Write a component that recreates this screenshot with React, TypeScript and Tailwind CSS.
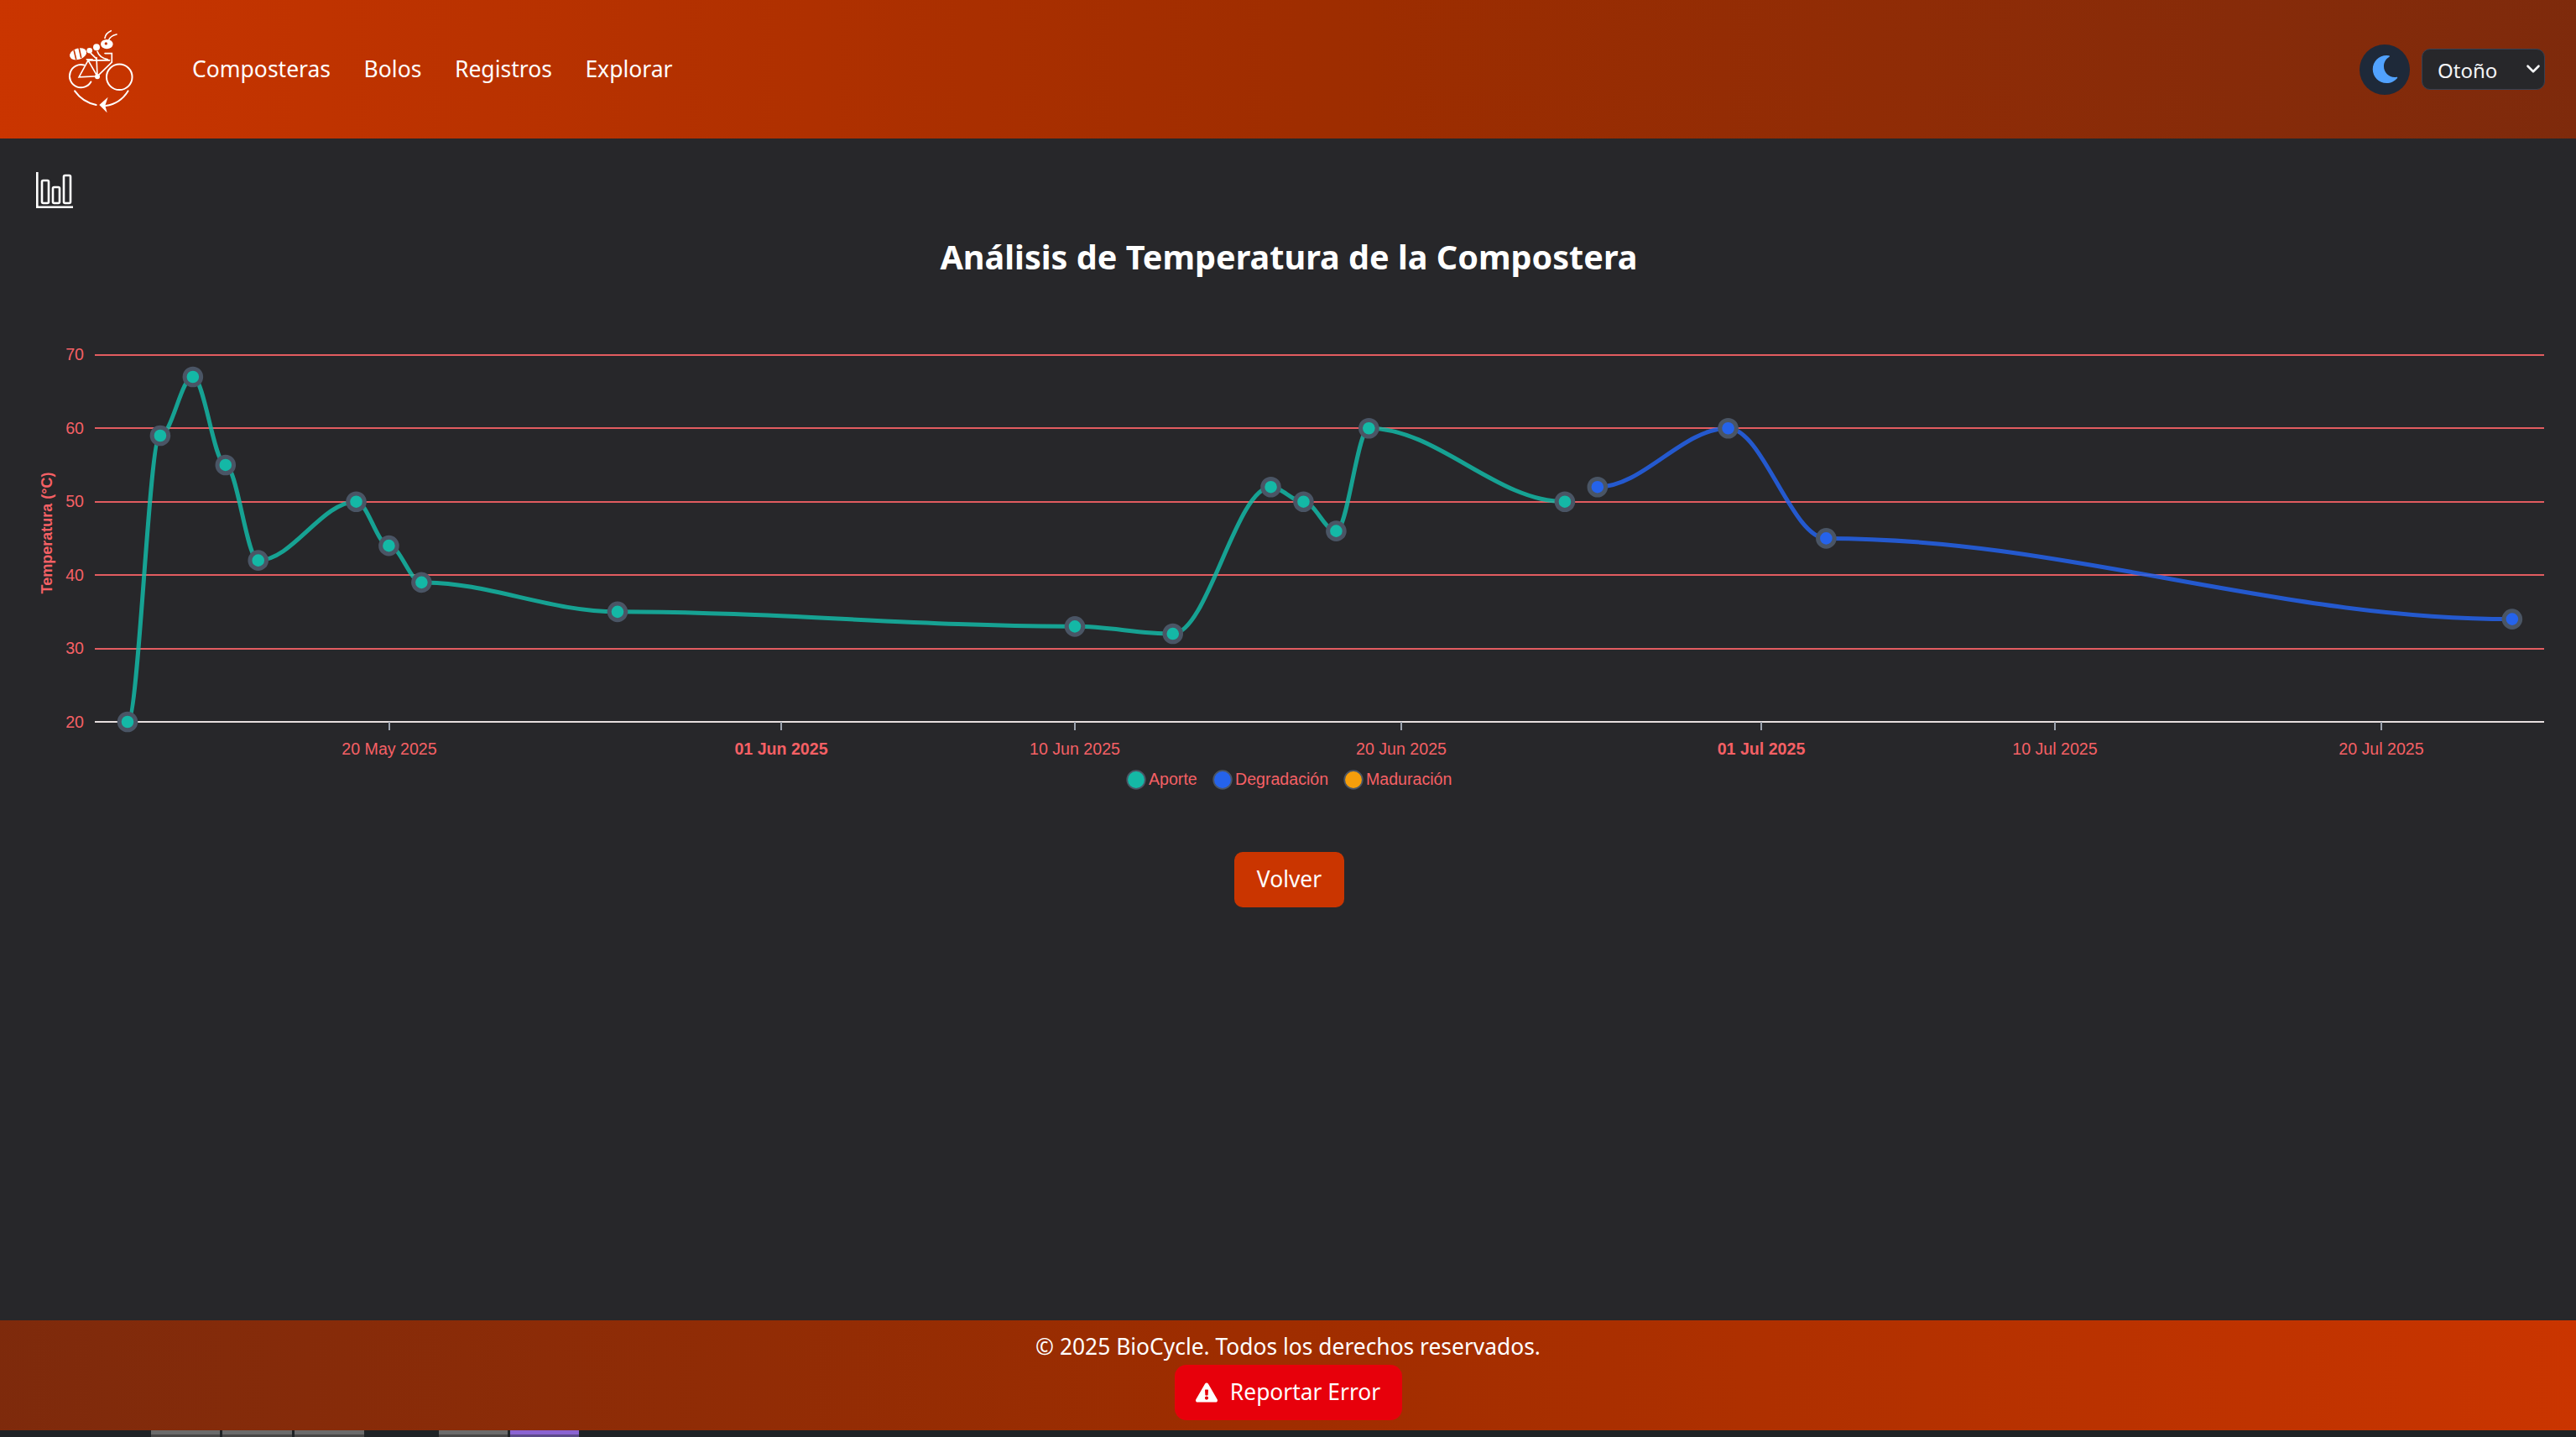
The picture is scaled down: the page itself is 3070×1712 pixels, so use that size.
import React from 'react';
import { ChevronDown } from 'lucide-react';
import { FaExclamationTriangle, FaMoon } from 'react-icons/fa';

type Point = { day: number; temp: number };

// days are counted from 12 May 2025
const aporte: Point[] = [
  { day: 0, temp: 20 }, { day: 1, temp: 59 }, { day: 2, temp: 67 }, { day: 3, temp: 55 },
  { day: 4, temp: 42 }, { day: 7, temp: 50 }, { day: 8, temp: 44 }, { day: 9, temp: 39 },
  { day: 15, temp: 35 }, { day: 29, temp: 33 }, { day: 32, temp: 32 }, { day: 35, temp: 52 },
  { day: 36, temp: 50 }, { day: 37, temp: 46 }, { day: 38, temp: 60 }, { day: 44, temp: 50 },
];
const degradacion: Point[] = [
  { day: 45, temp: 52 }, { day: 49, temp: 60 }, { day: 52, temp: 45 }, { day: 73, temp: 34 },
];

const xOf = (day: number) => 152 + day * 38.93;
const yOf = (temp: number) => 860 - (temp - 20) * 8.744;

// smooth curve: flat tangent at every point, arms of 35% of the gap
const smoothPath = (points: Point[]) =>
  points.reduce((d, p, i) => {
    const x = xOf(p.day);
    const y = yOf(p.temp);
    if (i === 0) return `M${x} ${y}`;
    const px = xOf(points[i - 1].day);
    const py = yOf(points[i - 1].temp);
    const arm = (x - px) * 0.35;
    return `${d}C${px + arm} ${py} ${x - arm} ${y} ${x} ${y}`;
  }, '');

const xLabels = [
  { x: 464, label: '20 May 2025' },
  { x: 931, label: '01 Jun 2025', bold: true },
  { x: 1281, label: '10 Jun 2025' },
  { x: 1670, label: '20 Jun 2025' },
  { x: 2099, label: '01 Jul 2025', bold: true },
  { x: 2449, label: '10 Jul 2025' },
  { x: 2838, label: '20 Jul 2025' },
];

const legend = [
  { cx: 1354, color: '#14b8a6', label: 'Aporte' },
  { cx: 1457, color: '#2563eb', label: 'Degradación' },
  { cx: 1613, color: '#f59e0b', label: 'Maduración' },
];

const RED = '#f56065';
const GRID = '#e25c60';

const Logo = () => (
  <svg viewBox="240 92 240 310" className="w-[80px] h-[103px]" fill="none" stroke="#fff" strokeWidth="6" strokeLinecap="round">
    <path d="M325 292A41 41 0 1 1 300 232" />
    <circle cx="427" cy="275" r="46" />
    <path d="M282 275L315 215L348 272ZM348 272L400 222M345 205L348 272M315 215H392M310 212H330" strokeWidth="5" />
    <circle cx="348" cy="273" r="9" fill="#fff" stroke="none" />
    <ellipse cx="279" cy="192" rx="31" ry="20" transform="rotate(-18 279 192)" fill="#fff" stroke="none" />
    <path d="M264 178L272 212M282 170L290 206" stroke="#c93400" strokeWidth="5" strokeLinecap="butt" />
    <circle cx="320" cy="180" r="10" fill="#fff" stroke="none" />
    <circle cx="345" cy="168" r="12" fill="#fff" stroke="none" />
    <ellipse cx="382" cy="157" rx="22" ry="17" fill="#fff" stroke="none" />
    <circle cx="379" cy="155" r="5" fill="#c93400" stroke="none" />
    <path d="M375 135Q378 117 397 109M389 142Q395 127 417 122" strokeWidth="5" />
    <path d="M348 183Q355 205 385 212M375 190H400V222M325 190L345 210" strokeWidth="5" />
    <path d="M267 325Q295 365 344 375M458 325Q430 370 378 378" strokeWidth="6" />
    <path d="M386 347L355 375L383 403L376 377Z" fill="#fff" stroke="none" />
  </svg>
);

const ChartIcon = () => (
  <svg viewBox="0 0 44 43" className="w-[44px] h-[43px]" fill="none" stroke="#fff" strokeWidth="2.6">
    <path d="M1.3 0V41.7H44" />
    <rect x="7" y="10" width="8" height="27" rx="1.5" />
    <rect x="20" y="18" width="8" height="19" rx="1.5" />
    <rect x="33" y="4" width="8" height="33" rx="1.5" />
  </svg>
);

const Chart = () => (
  <svg viewBox="0 380 3070 570" className="block w-full h-[570px] mt-[45px]" fontFamily="'Liberation Sans', Arial, sans-serif" fontSize="19.6" fill={RED}>
    {[70, 60, 50, 40, 30].map((t) => (
      <line key={t} x1="113" x2="3032" y1={Math.round(yOf(t))} y2={Math.round(yOf(t))} stroke={GRID} strokeWidth="2" />
    ))}
    <line x1="113" x2="3032" y1="860" y2="860" stroke="#e7dfdf" strokeWidth="2" />
    {[70, 60, 50, 40, 30, 20].map((t) => (
      <text key={t} x="100" y={yOf(t) + 6.5} textAnchor="end">{t}</text>
    ))}
    <text transform="translate(62 635) rotate(-90)" textAnchor="middle" fontWeight="700" fontSize="18">Temperatura (°C)</text>
    {xLabels.map((l) => (
      <g key={l.label}>
        <line x1={l.x} x2={l.x} y1="860" y2="870" stroke="#9ca3af" strokeWidth="2" />
        <text x={l.x} y="899" textAnchor="middle" fontWeight={l.bold ? 700 : 400}>{l.label}</text>
      </g>
    ))}
    <path d={smoothPath(aporte)} fill="none" stroke="#14b8a6" strokeOpacity="0.85" strokeWidth="5" />
    <path d={smoothPath(degradacion)} fill="none" stroke="#2563eb" strokeOpacity="0.85" strokeWidth="5" />
    {aporte.map((p) => (
      <circle key={p.day} cx={xOf(p.day)} cy={yOf(p.temp)} r="9.8" fill="#14b8a6" stroke="#4a5565" strokeWidth="5" />
    ))}
    {degradacion.map((p) => (
      <circle key={p.day} cx={xOf(p.day)} cy={yOf(p.temp)} r="9.8" fill="#2563eb" stroke="#4a5565" strokeWidth="5" />
    ))}
    {legend.map((l) => (
      <g key={l.label}>
        <circle cx={l.cx} cy="929" r="10.8" fill={l.color} stroke="#4a5565" strokeWidth="1.75" />
        <text x={l.cx + 15} y="934.5">{l.label}</text>
      </g>
    ))}
  </svg>
);

export default function App() {
  return (
    <div className="flex flex-col h-[1712px] overflow-hidden bg-[#27272a] text-white font-['Noto_Sans',sans-serif]">
      {/* Header */}
      <header className="h-[165px] shrink-0 flex items-center justify-between pl-[80px] pr-[37px] bg-gradient-to-r from-orange-700 via-orange-800 to-orange-900">
        <div className="flex items-center gap-[69px]">
          <Logo />
          <nav className="flex items-center gap-[39.5px] text-[26.5px]">
            <a>Composteras</a>
            <a>Bolos</a>
            <a>Registros</a>
            <a>Explorar</a>
          </nav>
        </div>
        <div className="flex items-center gap-[14px]">
          <button className="w-[60px] h-[60px] rounded-full bg-[#1e2939] flex items-center justify-center text-[#51a2ff]">
            <FaMoon size={33} />
          </button>
          <div className="relative">
            <select className="block appearance-none w-[147px] h-[49px] pl-[18px] pt-[2px] rounded-[10px] bg-[#27272a] border-[1.75px] border-[#364153] text-[24px] text-gray-100 font-['Noto_Sans',sans-serif]">
              <option>Otoño</option>
            </select>
            <ChevronDown size={26} strokeWidth={2.4} className="absolute right-[1px] top-[11px] text-gray-100 pointer-events-none" />
          </div>
        </div>
      </header>

      {/* Main */}
      <main className="flex-1 flex flex-col">
        <div className="pl-[43px] pt-[40px]">
          <ChartIcon />
        </div>
        <h1 className="mt-[30px] pl-[2px] text-center text-[39.6px] leading-[57px] font-bold">Análisis de Temperatura de la Compostera</h1>
        <Chart />
        <button className="mt-[65px] ml-[3px] self-center w-[131px] h-[66px] rounded-[10px] bg-orange-700 text-[26.4px]">Volver</button>
      </main>

      {/* Footer */}
      <footer className="h-[131px] shrink-0 flex flex-col items-center pt-[10px] bg-gradient-to-r from-orange-900 via-orange-800 to-orange-700">
        <p className="text-[26.4px] leading-[42px]">© 2025 BioCycle. Todos los derechos reservados.</p>
        <button className="mt-px w-[271px] h-[66px] rounded-[14px] bg-red-600 flex items-center justify-center gap-[15px] text-[26.4px]">
          <FaExclamationTriangle size={26} />
          Reportar Error
        </button>
      </footer>

      {/* Strip of the window below the page */}
      <div className="h-[8px] shrink-0 flex pl-[180px] gap-[3px] bg-[#1f2326]">
        <div className="w-[82px] border-t-[5px] border-[#6b6b6b] bg-[#474747]" />
        <div className="w-[83px] border-t-[5px] border-[#6b6b6b] bg-[#474747]" />
        <div className="w-[83px] border-t-[5px] border-[#6b6b6b] bg-[#474747]" />
        <div className="w-[82px] ml-[86px] border-t-[5px] border-[#6b6b6b] bg-[#474747]" />
        <div className="w-[82px] border-t-[5px] border-[#8a63d2] bg-[#5c4a8a]" />
      </div>
    </div>
  );
}
